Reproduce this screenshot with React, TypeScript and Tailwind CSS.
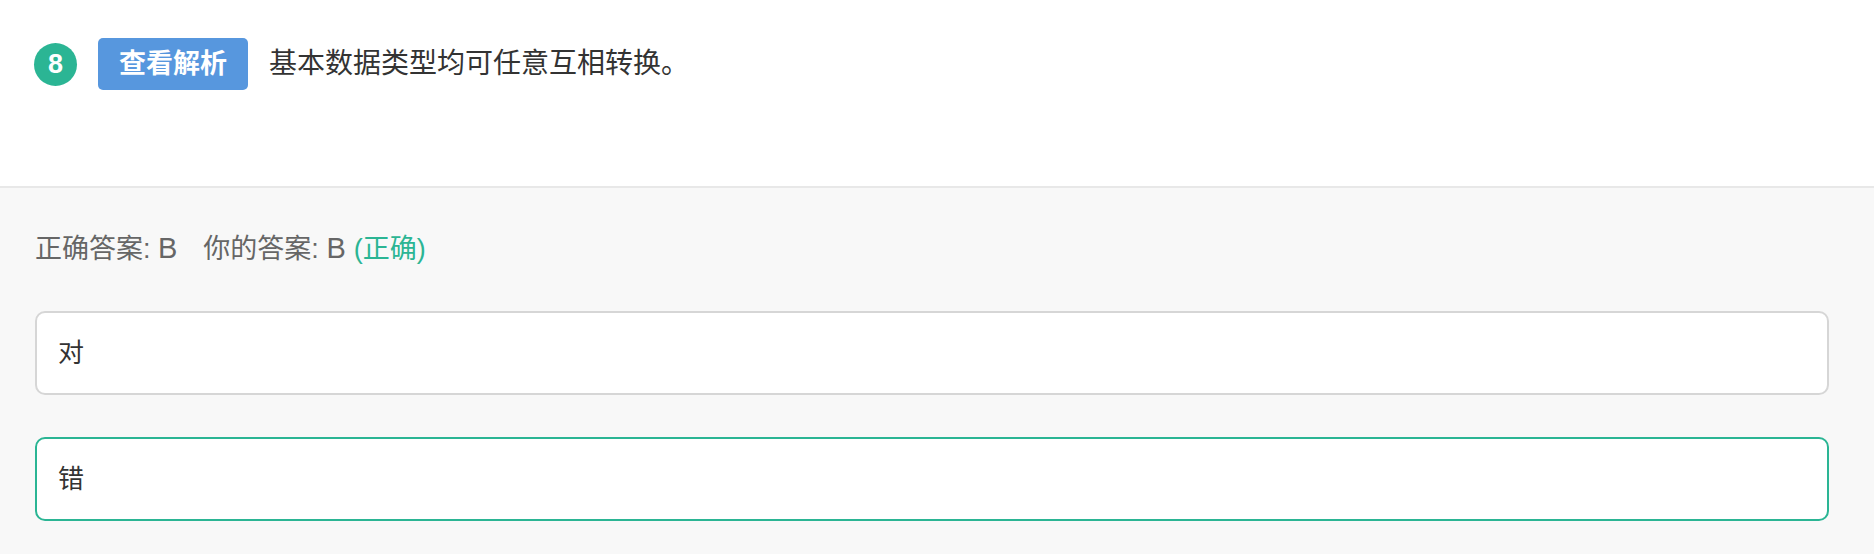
export default function App() {
  return (
    <div className="w-[1874px] h-[554px] bg-[#f8f8f8] font-['Liberation_Sans','Noto_Sans_CJK_SC',sans-serif] overflow-hidden">
      {/* question */}
      <div className="h-[188px] bg-white border-b-2 border-[#e8e8e8] pt-[38px] pl-[34px]">
        <div className="flex items-center">
          <div className="w-[43px] h-[43px] rounded-full bg-[#2bb594] text-white font-bold text-[27px] flex items-center justify-center">
            8
          </div>
          <button className="ml-[21px] h-[52px] px-[21px] rounded-[5px] bg-[#5797de] text-white text-[27px] font-semibold leading-none">
            查看解析
          </button>
          <span className="ml-[21px] text-[28px] text-[#333]">基本数据类型均可任意互相转换。</span>
        </div>
      </div>

      {/* answers */}
      <div className="pl-[35px] pr-[45px] pt-[41px]">
        <div className="h-[40px] flex items-center text-[27px] text-[#666]">
          <span className="mr-[26px]">正确答案: <span className="text-[29px]">B</span></span>
          <span>你的答案: <span className="text-[29px]">B</span></span>
          <span className="ml-[8px] text-[#2bb594]">(正确)</span>
        </div>
        <div className="mt-[42px] h-[84px] flex items-center px-[21px] bg-white border-2 border-[#d6d6d6] rounded-[10px] text-[26px] text-[#333]">
          对
        </div>
        <div className="mt-[42px] h-[84px] flex items-center px-[21px] bg-white border-2 border-[#2bb594] rounded-[10px] text-[26px] text-[#333]">
          错
        </div>
      </div>
    </div>
  );
}
